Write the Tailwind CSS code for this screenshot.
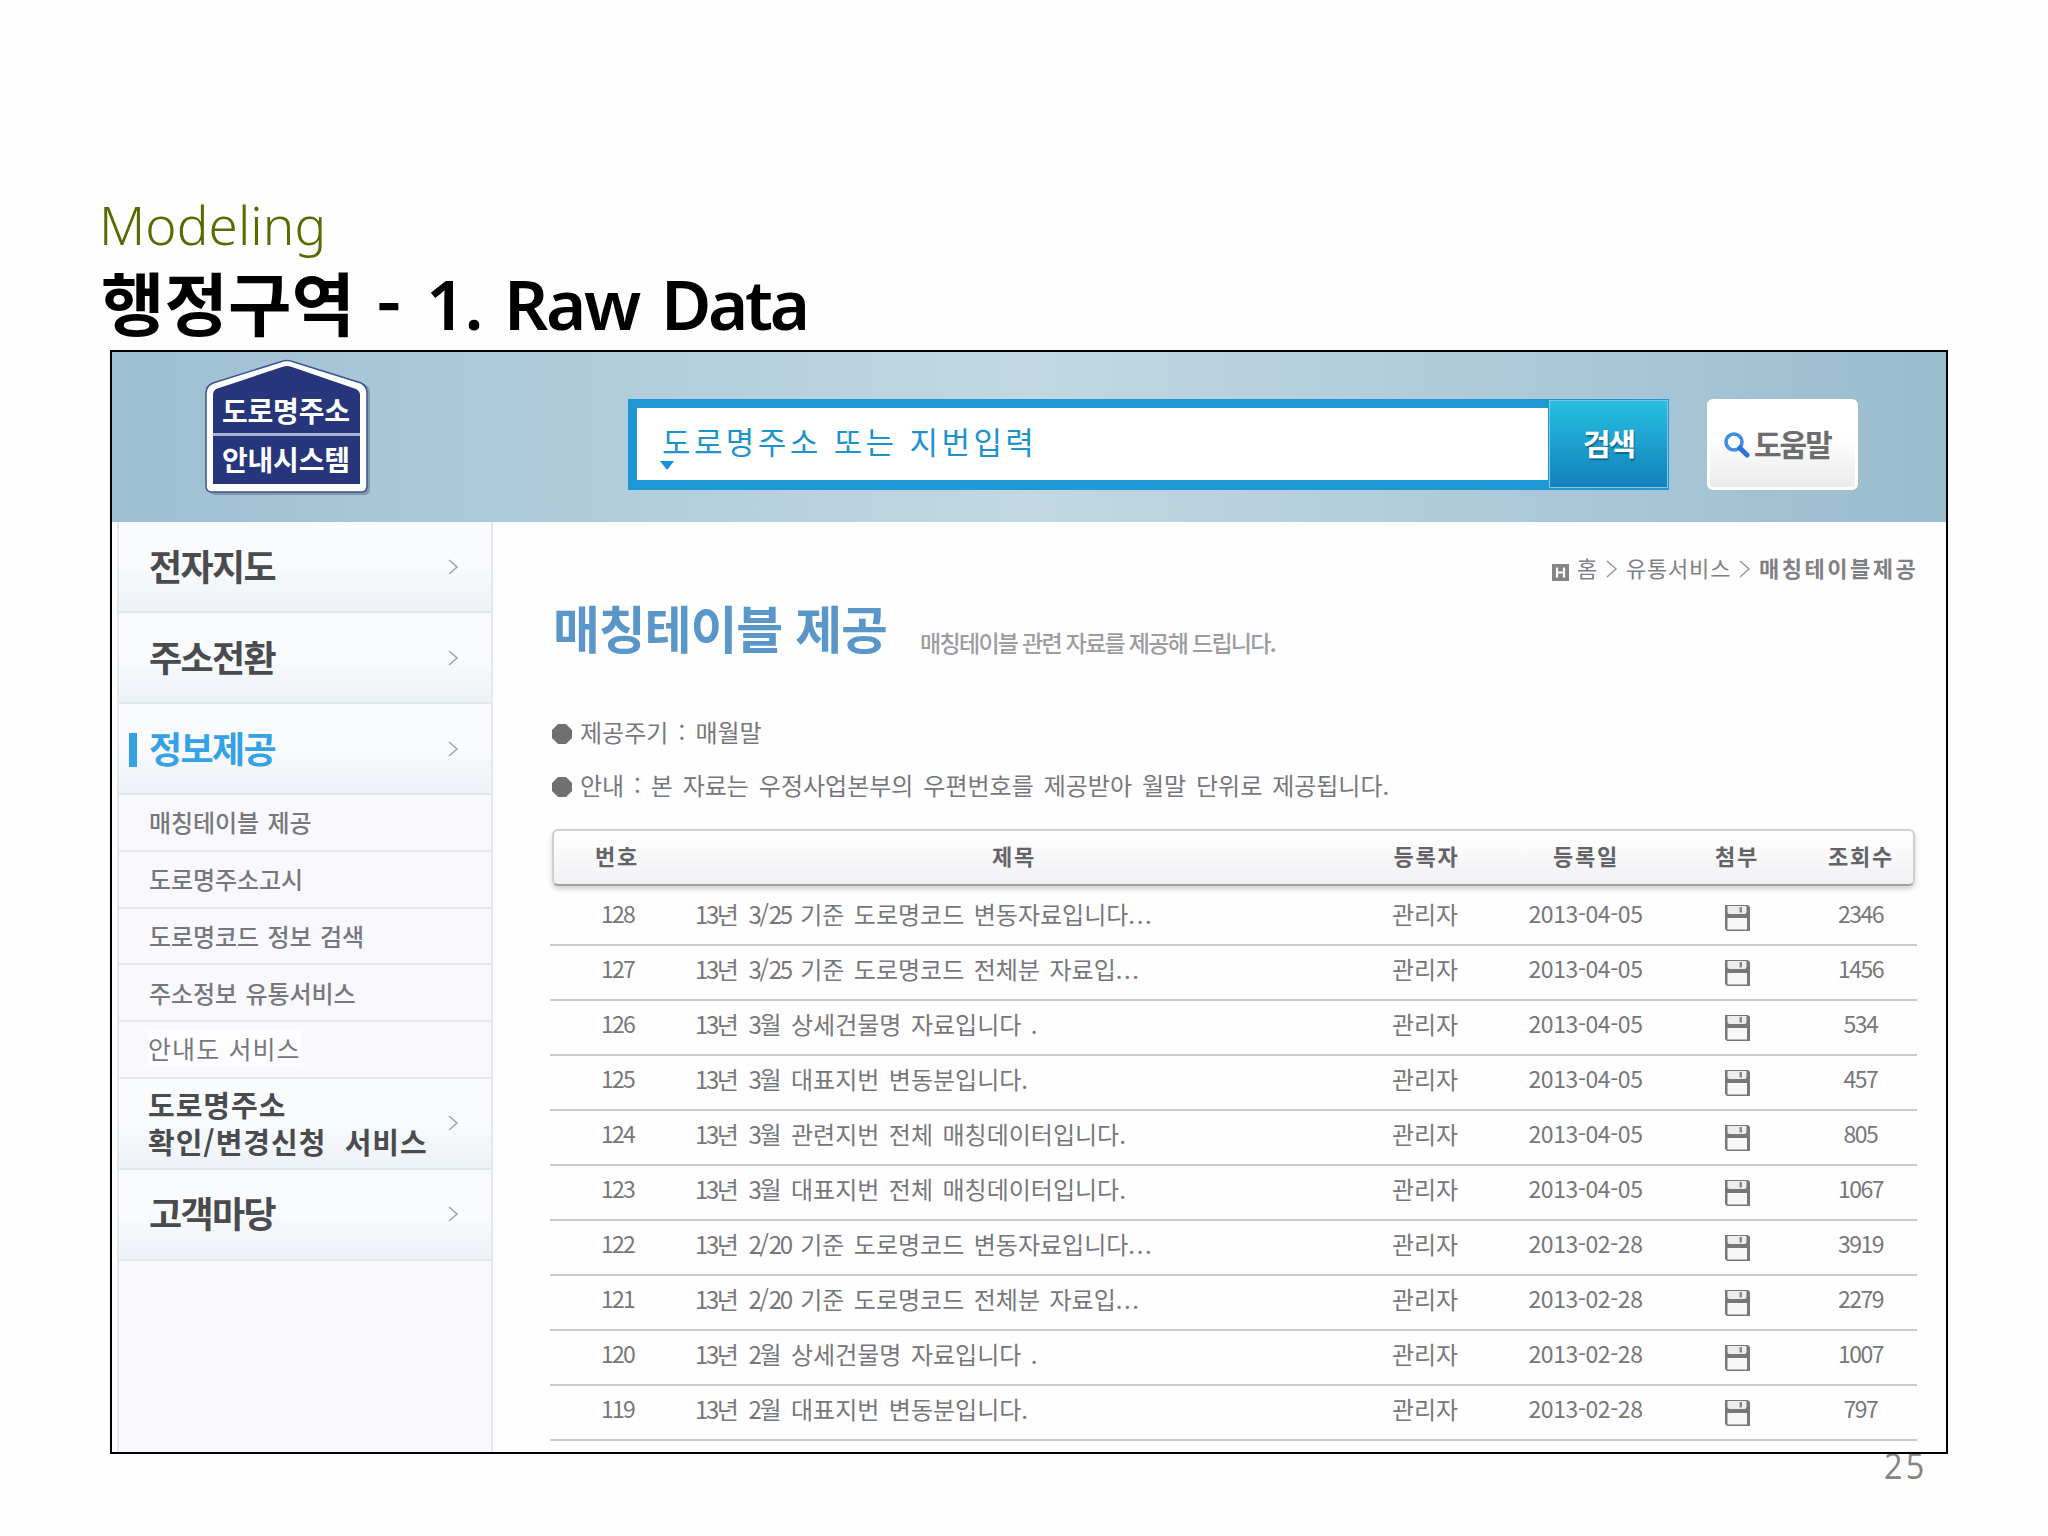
<!DOCTYPE html>
<html lang="ko">
<head>
  <meta charset="UTF-8" />
  <meta name="viewport" content="width=device-width, initial-scale=1.0" />
  <title>행정구역 - 1. Raw Data</title>
  <script src="https://cdn.jsdelivr.net/npm/@tailwindcss/browser@4"></script>
</head>
<body class="w-[2048px] h-[1536px] overflow-hidden bg-[#fefefe] font-['Noto_Sans_CJK_KR',sans-serif] pt-[195px] whitespace-nowrap">

  <!-- Slide title -->
  <div class="pl-[99px] h-[60px] leading-[60px] text-[53px] font-light text-[#5c6800] font-['Noto_Sans','Noto_Sans_CJK_KR',sans-serif] tracking-[0.1px]">Modeling</div>
  <h1 class="pl-[101px] h-[95px] leading-[92px] text-[69px] font-bold text-black flex">
    <span class="w-[275px]">행정구역</span>
    <span class="w-[50px] pt-[2px]">-</span>
    <span class="w-[78px] pt-[2px] font-['Noto_Sans','Noto_Sans_CJK_KR',sans-serif] font-semibold tracking-[-1px]">1.</span>
    <span class="w-[157px] pt-[2px] font-['Noto_Sans','Noto_Sans_CJK_KR',sans-serif] font-semibold tracking-[-2.4px]">Raw</span>
    <span class="pt-[2px] font-['Noto_Sans','Noto_Sans_CJK_KR',sans-serif] font-semibold tracking-[-3.4px]">Data</span>
  </h1>

  <!-- Site capture -->
  <div class="relative z-10 ml-[110px] w-[1838px] h-[1104px] border-2 border-black bg-[#fefefe] overflow-hidden">

    <!-- Header -->
    <div class="h-[170px] flex items-start bg-linear-to-r from-[#9dbfd2] via-[#c1d8e3] to-[#9abccf]">
      <svg class="ml-[92px] mt-[6px]" width="166" height="138" viewBox="0 0 166 138">
        <path d="M3 31 Q3 26 8 23 L76 3 Q83 0 90 3 L158 24 Q164 27 164 32 V129 Q164 135 158 135 H10 Q4 135 4 129 Z" fill="#000" opacity=".22" transform="translate(2 2)"/>
        <path d="M2 35 Q2 28 9 25 L76 4 Q83 1 90 4 L157 25 Q163 28 163 35 V128 Q163 134 157 134 H8 Q2 134 2 128 Z" fill="#fff" stroke="#3c5490" stroke-width="1.5"/>
        <path d="M9 37 Q9 33 12 31 L78 9 Q83 7 88 9 L152 31 Q156 33 156 37 V126 H9 Z" fill="#27357a"/>
        <rect x="9" y="75" width="147" height="3" fill="#a9b2d2"/>
        <g fill="#fff" font-family="'Noto Sans CJK KR',sans-serif" font-weight="700" font-size="28" text-anchor="middle">
          <text x="82" y="64" textLength="128">도로명주소</text>
          <text x="82" y="113" textLength="128">안내시스템</text>
        </g>
      </svg>

      <div class="ml-[258px] mt-[47px] w-[1041px] h-[91px] flex bg-[#1e98d3]">
        <div class="ml-[9px] mt-[9px] w-[911px] h-[72px] bg-white">
          <div class="pl-[25px] h-[53px] leading-[66px] text-[31px] text-[#1e93cb] tracking-[3.4px]">도로명주소 또는 지번입력</div>
          <svg class="ml-[23px]" width="14" height="9" viewBox="0 0 14 9"><path d="M0 0 H14 L7 9 Z" fill="#1a8fd6"/></svg>
        </div>
        <div class="ml-[1px] mt-[1px] w-[119px] h-[88px] border border-[#7cc8e8] bg-linear-to-b from-[#27bfe0] to-[#1580bb] text-center text-white text-[30px] font-bold leading-[82px] tracking-[-2px] text-shadow-[1px_2px_1px_rgba(0,60,90,0.5)]">검색</div>
      </div>

      <div class="ml-[38px] mt-[47px] w-[151px] h-[91px] rounded-md border-[3px] border-white bg-linear-to-b from-white from-40% to-[#ebebeb] flex items-center">
        <svg class="ml-[13px]" width="27" height="27" viewBox="0 0 27 27" fill="none">
          <circle cx="11" cy="11" r="8" stroke="#3f8ee6" stroke-width="3.6"/>
          <path d="M17 17 L24 24" stroke="#2f6fdc" stroke-width="5" stroke-linecap="round"/>
        </svg>
        <span class="-mt-[3px] ml-[4px] text-[30px] font-bold text-[#6d6d6d] tracking-[-2px] leading-[80px]">도움말</span>
      </div>
    </div>

    <div class="flex h-[930px]">
      <!-- Side menu -->
      <div class="ml-[5px] w-[376px] border-x-2 border-[#e4e8ee] bg-[#f9f9fd]">
        <div id="menu"></div>
      </div>

      <!-- Content -->
      <div class="ml-[57px] w-[1367px] text-[#77777b]">
        <div class="h-[66px] pt-[25px] flex justify-end items-start text-[22px] leading-[41px] text-[#808083]">
          <svg class="mt-[17px] mr-[8px]" width="17" height="17" viewBox="0 0 17 17"><rect width="17" height="17" fill="#858588"/><path d="M5 3.5 V13.5 M12 3.5 V13.5 M5 8.5 H12" stroke="#fff" stroke-width="2.2"/></svg>
          <span class="w-[29px]">홈</span>
          <svg class="mt-[12px] mr-[8px]" width="12" height="20" viewBox="0 0 12 20" fill="none" stroke="#99999c" stroke-width="1.5"><path d="M1 2 L10 10 L1 18"/></svg>
          <span class="w-[113px] tracking-[0.8px]">유통서비스</span>
          <svg class="mt-[12px] mr-[8px]" width="12" height="20" viewBox="0 0 12 20" fill="none" stroke="#99999c" stroke-width="1.5"><path d="M1 2 L10 10 L1 18"/></svg>
          <b class="w-[158px] tracking-[2.5px]">매칭테이블제공</b>
        </div>

        <div class="h-[118px] flex items-start">
          <h2 class="ml-[3px] w-[367px] leading-[79px] text-[51px] font-bold text-[#5a96c8] tracking-[-1.1px]">매칭테이블 제공</h2>
          <p class="mt-[19px] leading-[70px] text-[23px] font-medium text-[#9c9c9f] tracking-[-1.7px]">매칭테이블 관련 자료를 제공해 드립니다.</p>
        </div>

        <div class="h-[53px] flex items-center pl-[2px] text-[24px] [word-spacing:3.5px]">
          <svg class="mt-[3px] mr-[8px]" width="20" height="20" viewBox="0 0 20 20"><path d="M6 0 H14 L20 6 V14 L14 20 H6 L0 14 V6 Z" fill="#707073"/></svg>
          <span class="-mt-[1px] text-[#77777b]">제공주기 : 매월말</span>
        </div>
        <div class="h-[53px] flex items-center pl-[2px] text-[24px] [word-spacing:3.2px]">
          <svg class="mt-[3px] mr-[8px]" width="20" height="20" viewBox="0 0 20 20"><path d="M6 0 H14 L20 6 V14 L14 20 H6 L0 14 V6 Z" fill="#707073"/></svg>
          <span class="-mt-[1px] text-[#77777b]">안내 : 본 자료는 우정사업본부의 우편번호를 제공받아 월말 단위로 제공됩니다.</span>
        </div>

        <!-- Table -->
        <div class="mt-[17px] ml-[2px] w-[1363px] h-[57px] rounded-md border-2 border-[#cfcfd2] border-b-[#a3a3a6] bg-linear-to-b from-white to-[#f1f1f4] shadow-[0_3px_5px_rgba(0,0,0,0.18)] grid grid-cols-[126px_668px_157px_162px_140px_108px] text-center text-[22px] leading-[49px] font-bold text-[#646468] tracking-[1.8px]">
          <div>번호</div><div>제목</div><div>등록자</div><div>등록일</div><div>첨부</div><div>조회수</div>
        </div>
        <div id="rows" class="pt-[5px]"></div>
      </div>
    </div>
  </div>

  <!-- Page number -->
  <div class="ml-[1884px] -mt-[13px] leading-[50px] text-[36px] text-[#858585] font-['Open_Sans',sans-serif] font-normal tracking-[3.5px] scale-x-90 origin-left">25</div>

  <script>
    const menu = [
      { t: '전자지도', type: 'main' },
      { t: '주소전환', type: 'main' },
      { t: '정보제공', type: 'active' },
      { t: '매칭테이블 제공', type: 'sub' },
      { t: '도로명주소고시', type: 'sub' },
      { t: '도로명코드 정보 검색', type: 'sub' },
      { t: '주소정보 유통서비스', type: 'sub' },
      { t: '안내도 서비스', type: 'sub2' },
      { t: '도로명주소<br>확인/변경신청&nbsp; 서비스', type: 'double' },
      { t: '고객마당', type: 'main' }
    ];

    const rows = [
      ['128', '13년 3/25 기준 도로명코드 변동자료입니다...', '2013-04-05', '2346'],
      ['127', '13년 3/25 기준 도로명코드 전체분 자료입...', '2013-04-05', '1456'],
      ['126', '13년 3월 상세건물명 자료입니다 .', '2013-04-05', '534'],
      ['125', '13년 3월 대표지번 변동분입니다.', '2013-04-05', '457'],
      ['124', '13년 3월 관련지번 전체 매칭데이터입니다.', '2013-04-05', '805'],
      ['123', '13년 3월 대표지번 전체 매칭데이터입니다.', '2013-04-05', '1067'],
      ['122', '13년 2/20 기준 도로명코드 변동자료입니다...', '2013-02-28', '3919'],
      ['121', '13년 2/20 기준 도로명코드 전체분 자료입...', '2013-02-28', '2279'],
      ['120', '13년 2월 상세건물명 자료입니다 .', '2013-02-28', '1007'],
      ['119', '13년 2월 대표지번 변동분입니다.', '2013-02-28', '797']
    ];

    const chevron = '<svg width="10" height="16" viewBox="0 0 10 16" fill="none" stroke="#a3a6ab" stroke-width="1.6"><path d="M1 1 L9 8 L1 15"/></svg>';

    const big = 'h-[91px] flex items-center justify-between pl-[30px] pr-[33px] border-b-2 border-[#e2e7ec] bg-linear-to-b from-[#f9fbfd] from-50% to-[#edf2f7]';
    const label = {
      main: '-mt-[4px] text-[36px] font-bold text-[#4a4b4e] tracking-[-1.6px]',
      active: '-mt-[3px] text-[36px] font-bold text-[#35a2e6] tracking-[-1.6px]',
      double: '-ml-[1px] text-[29px] font-bold leading-[37px] text-[#4a4b4e] tracking-[1px]',
      sub: 'text-[24px] font-medium text-[#77787b] tracking-[-0.1px] [word-spacing:2px]',
      sub2: '-mt-[3px] -ml-[1px] text-[25px] text-[#77787b] tracking-[1.1px] bg-white/70 leading-[36px]'
    };

    document.getElementById('menu').innerHTML = menu.map(m => {
      const text = '<span class="' + label[m.type] + '">' + m.t + '</span>';
      if (m.type.startsWith('sub')) {
        return '<div class="h-[56.8px] flex items-center pl-[30px] border-b-2 border-[#e2e7ec]">' + text + '</div>';
      }
      const bar = m.type === 'active' ? '<i class="absolute left-[10px] top-[29px] w-[8px] h-[34px] bg-[#35a2e6]"></i>' : '';
      return '<div class="relative ' + big + '">' + bar + text + chevron + '</div>';
    }).join('');

    const disk = '<svg width="27" height="28" viewBox="0 0 27 28">' +
      '<path d="M1 1 H24 L26 3 V27 H3 L1 25 Z" fill="#77777a"/>' +
      '<path d="M3.5 2 H22.5 V8 Q22.5 10 20.5 10 H5.5 Q3.5 10 3.5 8 Z" fill="#ededee"/>' +
      '<rect x="15.5" y="3" width="2.5" height="5.5" fill="#8a8a8e"/>' +
      '<rect x="3.5" y="14" width="19.5" height="11.5" fill="#f7f7f8"/></svg>';

    // digits run narrower than the hangul around them
    const narrow = s => s.replace(/\d+/g, '<span class="tracking-[-2.4px]">$&</span>').replace('...', '<span class="tracking-[1.6px]">...</span>');

    document.getElementById('rows').innerHTML = rows.map(r =>
      '<div class="h-[55px] border-b-2 border-[#cacacd] grid grid-cols-[135px_661px_158px_163px_140px_107px] text-center text-[24px] leading-[45px] text-[#77777b]">' +
        '<div class="text-[23px] tracking-[-1.7px]">' + r[0] + '</div>' +
        '<div class="text-left pl-[10px] [word-spacing:2.8px]">' + narrow(r[1]) + '</div>' +
        '<div>관리자</div>' +
        '<div class="text-[23px] tracking-[-0.4px]">' + r[2] + '</div>' +
        '<div class="flex justify-center pt-[13px]">' + disk + '</div>' +
        '<div class="text-[23px] tracking-[-1.5px]">' + r[3] + '</div>' +
      '</div>'
    ).join('');
  </script>
</body>
</html>
